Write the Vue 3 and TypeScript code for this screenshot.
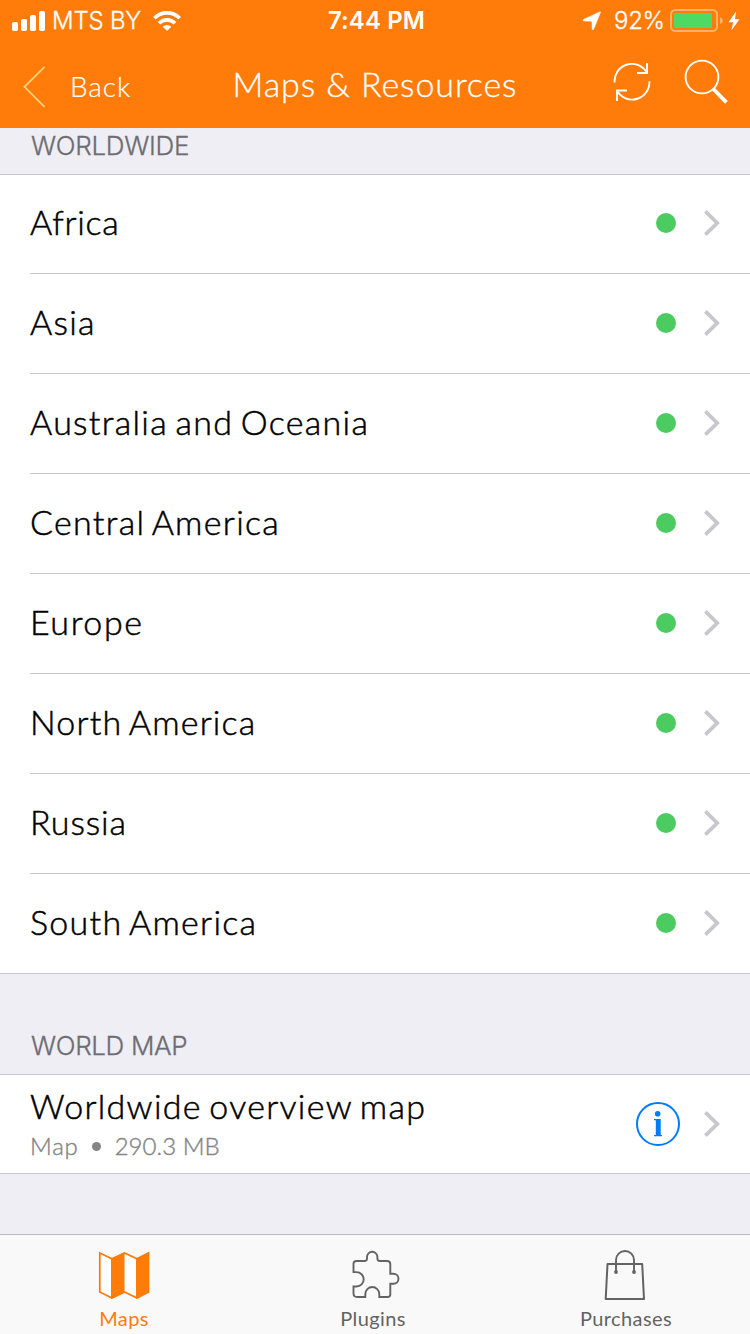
<script setup lang="ts">
interface Region {
  name: string
  spacing: number
}

const regions: Region[] = [
  { name: 'Africa', spacing: 0.7 },
  { name: 'Asia', spacing: 1.2 },
  { name: 'Australia and Oceania', spacing: 1.3 },
  { name: 'Central America', spacing: 1.3 },
  { name: 'Europe', spacing: 1.6 },
  { name: 'North America', spacing: 1.2 },
  { name: 'Russia', spacing: 0.9 },
  { name: 'South America', spacing: 1.3 },
]
</script>

<template>
  <div class="screen">
    <header class="top">
      <div class="status">
        <div class="status-left">
          <svg class="signal" width="34" height="20" viewBox="0 0 34 20" fill="#fff">
            <rect x="0" y="11" width="6" height="9" rx="1.8" />
            <rect x="9" y="8" width="6" height="12" rx="1.8" />
            <rect x="18" y="4" width="6" height="16" rx="1.8" />
            <rect x="27" y="0" width="6" height="20" rx="1.8" />
          </svg>
          <span class="carrier">MTS BY</span>
          <svg class="wifi" width="28" height="20" viewBox="0 0 28 20" fill="none" stroke="#fff" stroke-width="3.7">
            <path d="M1.3 7.2a18 18 0 0 1 25.4 0" />
            <path d="M6 12.200a11.4 11.4 0 0 1 16 0" />
            <path d="M14 20l-4.3-4.2a6.2 6.2 0 0 1 8.6 0z" fill="#fff" stroke="none" />
          </svg>
        </div>
        <span class="clock">7:44 PM</span>
        <div class="status-right">
          <svg class="locate" width="20" height="20" viewBox="0 0 20 20">
            <path d="M18.6 1.1L11.6 18.2q-.8 1.4-1.4 0L10 10.2 1.7 9.9q-1.3-.4-.1-1.4L17.5 1q1-.4 1.1.1z" fill="#fff" stroke="#fff" stroke-width=".6" />
          </svg>
          <span class="percent">92%</span>
          <svg class="battery" width="54" height="24" viewBox="0 0 54 24">
            <rect x="1" y="1" width="46" height="21" rx="4.5" fill="none" stroke="#ffb06b" stroke-width="2" />
            <path d="M50 8q3 1.2 3 3.5T50 15z" fill="#ffb06b" />
            <rect x="4" y="4" width="38" height="15" rx="1" fill="#4cd964" />
          </svg>
          <svg class="bolt" width="12" height="20" viewBox="0 0 12 20">
            <path d="M8 .5L.5 11.2h4.6L3.4 19.5 11.5 8.3H7z" fill="#fff" />
          </svg>
        </div>
      </div>
      <div class="nav">
        <div class="back">
          <svg width="23" height="42" viewBox="0 0 23 42" fill="none" stroke="#ffd07a" stroke-width="1.8">
            <path d="M21.5 .8L1.5 20.8l20 20" />
          </svg>
          <span>Back</span>
        </div>
        <h1>Maps &amp; Resources</h1>
        <div class="actions">
          <svg class="refresh" width="38" height="40" viewBox="0 0 38 40" fill="none" stroke="#fff" stroke-width="1.9">
            <path d="M1.6 20.5A17.3 17.3 0 0 1 33.5 10" />
            <path d="M34 1v10h-10" />
            <path d="M36.4 19.3A17.3 17.3 0 0 1 4.5 29.5" />
            <path d="M4 39V28.5h10" />
          </svg>
          <svg class="search" width="44" height="46" viewBox="0 0 44 46" fill="none" stroke="#fff">
            <circle cx="18" cy="18" r="16.4" stroke-width="1.9" />
            <path d="M28.9 29.500L42.400 43.400" stroke-width="3.8" />
          </svg>
        </div>
      </div>
    </header>

    <main>
      <h2 class="section first">WORLDWIDE</h2>
      <ul class="list">
        <li v-for="region in regions" :key="region.name" class="row">
          <span class="name" :style="{ letterSpacing: region.spacing + 'px' }">{{ region.name }}</span>
          <i class="dot"></i>
          <svg class="chevron" width="16" height="26" viewBox="0 0 16 26" fill="none" stroke="#c7c7cc" stroke-width="3.8">
            <path d="M1.4 1.4L13.200 13 1.4 24.6" />
          </svg>
        </li>
      </ul>
      <h2 class="section second">WORLD MAP</h2>
      <div class="overview">
        <div class="overview-text">
          <span class="name overview-name">Worldwide overview map</span>
          <span class="detail"><span>Map</span><i class="bullet"></i><span class="size">290.3 MB</span></span>
        </div>
        <svg class="info" width="44" height="44" viewBox="0 0 44 44">
          <circle cx="22" cy="22" r="21" fill="none" stroke="#007aff" stroke-width="2" />
          <circle cx="21.7" cy="11.7" r="2.8" fill="#007aff" />
          <path d="M18 17h6.700v16H26v1.3h-8V33h1.8V18.300H18z" fill="#007aff" />
        </svg>
        <svg class="chevron" width="16" height="26" viewBox="0 0 16 26" fill="none" stroke="#c7c7cc" stroke-width="3.8">
          <path d="M1.4 1.4L13.200 13 1.4 24.6" />
        </svg>
      </div>
    </main>

    <nav class="tabs">
      <div class="tab active">
        <svg width="52" height="50" viewBox="0 0 52 50">
          <path d="M1.8 3L14 8.700 26.500 3 39 8.700 50.500 3V42L39 48 26.500 42 14 48 1.800 42z" fill="#fff" stroke="#ff7c0a" stroke-width="1.8" />
          <path d="M13 8.700L26.500 2.500V42.500L13 49zM38 8.700L51 2.500V42.500L38 49z" fill="#ff7c0a" />
        </svg>
        <span>Maps</span>
      </div>
      <div class="tab plugins">
        <svg width="52" height="50" viewBox="0 0 52 50" fill="none" stroke="#636363" stroke-width="1.9">
          <path d="M7.500 11H15.500Q18 11 18 8.500V7a5.200 5.200 0 0 1 10.400 0V8.500Q28.400 11 31 11H38Q41.300 11 41.300 14V23.700H44.500a5 5 0 0 1 0 10H41.300V44.500Q41.300 47 38.500 47H30.300V44a7 7 0 0 0-14 0V47H8Q4.500 47 4.500 43.500V36.500H7.500a7.200 7.200 0 0 0 0-14.400H4.500V14Q4.500 11 7.500 11z" />
        </svg>
        <span>Plugins</span>
      </div>
      <div class="tab purchases">
        <svg width="52" height="50" viewBox="0 0 52 50" fill="none" stroke="#636363" stroke-width="1.900">
          <path d="M8.500 14H43.200L45 49H6.700z" stroke-linejoin="round" stroke-width="2" />
          <path d="M17 21.500V10a9 9 0 0 1 18 0V21.500" />
          <circle cx="17" cy="22" r="1.900" fill="#636363" stroke="none" />
          <circle cx="35" cy="22" r="1.900" fill="#636363" stroke="none" />
        </svg>
        <span>Purchases</span>
      </div>
    </nav>
  </div>
</template>

<style>
body {
  margin: 0;
}
</style>

<style scoped>
* {
  box-sizing: border-box;
}
.screen {
  width: 750px;
  height: 1334px;
  display: flex;
  flex-direction: column;
  background: #efeef4;
  font-family: Lato, 'Open Sans', sans-serif;
  overflow: hidden;
}
svg {
  display: block;
  flex: none;
}
h1,
h2,
ul {
  margin: 0;
  padding: 0;
  font-weight: 400;
}
span,
h1,
h2 {
  white-space: nowrap;
}
.top {
  height: 128px;
  flex: none;
  background: #ff7c0a;
  color: #fff;
}
.status {
  height: 40px;
  display: grid;
  grid-template-columns: 250px 1fr 250px;
  align-items: center;
  font-family: Inter, sans-serif;
  font-size: 24px;
  line-height: 40px;
}
.status-left,
.status-right {
  display: flex;
  align-items: center;
}
.status-left {
  padding-left: 12px;
}
.carrier {
  width: 88px;
  margin: 1px 13px 0 6px;
  font-weight: 300;
  letter-spacing: -0.2px;
  -webkit-text-stroke: 0.3px #fff;
}
.clock {
  margin-left: 3px;
  padding-top: 1px;
  text-align: center;
  font-weight: 600;
  letter-spacing: 0.1px;
}
.status-right {
  padding-left: 82px;
}
.percent {
  width: 50px;
  margin: 1px 6px 0 12px;
  font-weight: 300;
  letter-spacing: -0.3px;
  -webkit-text-stroke: 0.3px #fff;
}
.bolt {
  margin-left: 4px;
}
.nav {
  height: 88px;
  display: grid;
  grid-template-columns: 200px 1fr 200px;
}
.back {
  display: flex;
  align-items: flex-start;
  padding: 26px 0 0 23px;
  font-size: 28px;
  font-weight: 300;
  line-height: 40px;
  letter-spacing: 0.9px;
  -webkit-text-stroke: 0.2px #fff;
}
.back span {
  margin-left: 24px;
}
h1 {
  padding-top: 23px;
  font-size: 34px;
  font-weight: 300;
  line-height: 42px;
  letter-spacing: 0.9px;
  text-align: center;
  -webkit-text-stroke: 0.3px #fff;
}
.actions {
  display: flex;
  padding-left: 63px;
}
.refresh {
  margin: 22px 33px 0 0;
}
.search {
  margin-top: 19px;
}
.section {
  padding-left: 31px;
  border-bottom: 1px solid #c8c7cc;
  color: #6d6d72;
  font-family: Inter, sans-serif;
  font-size: 26px;
  line-height: 32px;
  font-weight: 300;
  -webkit-text-stroke: 0.3px #6d6d72;
}
.first {
  height: 47px;
  padding-top: 2px;
  letter-spacing: -0.3px;
}
.second {
  height: 101px;
  padding-top: 56px;
  letter-spacing: -0.35px;
}
.list {
  list-style: none;
  background: #fff;
  border-bottom: 1px solid #c8c7cc;
}
.row {
  height: 100px;
  display: flex;
  align-items: center;
  margin-left: 30px;
  padding: 0 30px 2px 0;
  border-bottom: 1px solid #c8c7cc;
}
.row:first-child {
  height: 99px;
}
.row:last-child {
  height: 99px;
  border-bottom: 0;
}
.name {
  color: #000;
  font-size: 34px;
  line-height: 42px;
  font-weight: 300;
  word-spacing: -3px;
  -webkit-text-stroke: 0.5px #000;
}
.row .name {
  padding-bottom: 1px;
}
.row:first-child .name {
  padding-bottom: 2px;
}
.dot {
  width: 20px;
  height: 20px;
  margin-left: auto;
  border-radius: 50%;
  background: #4ccb61;
}
.chevron {
  margin-left: 28px;
}
.overview {
  height: 99px;
  display: flex;
  align-items: center;
  padding: 0 30px;
  background: #fff;
  border-bottom: 1px solid #c8c7cc;
}
.overview-text {
  align-self: flex-start;
  padding-top: 10px;
  display: flex;
  flex-direction: column;
}
.overview-name {
  letter-spacing: 1.3px;
}
.detail {
  display: flex;
  align-items: center;
  color: #858585;
  font-size: 24px;
  font-weight: 300;
  line-height: 38px;
  letter-spacing: 0.8px;
  -webkit-text-stroke: 0.4px #858585;
}
.bullet {
  width: 9px;
  height: 9px;
  margin: 0 14px 0 13px;
  border-radius: 50%;
  background: #858585;
}
.size {
  letter-spacing: 0.05px;
}
.info {
  margin-left: auto;
}
.overview .chevron {
  margin-left: 24px;
}
.tabs {
  height: 100px;
  margin-top: auto;
  border-top: 1px solid #b8b8bc;
  background: #f9f9f9;
  display: flex;
  justify-content: space-between;
}
.tab {
  width: 248px;
  display: flex;
  flex-direction: column;
  align-items: center;
  padding-top: 15px;
  color: #636363;
  font-size: 20px;
  line-height: 26px;
  letter-spacing: 0.4px;
}
.active svg {
  margin-right: 1px;
}
.plugins {
  width: 246px;
  margin-right: 2px;
}
.plugins svg {
  margin-left: 3px;
}
.purchases {
  width: 250px;
}
.tab span {
  margin-top: 5px;
}
.purchases span {
  margin-left: 2px;
}
.active {
  color: #ff7c0a;
}
</style>
